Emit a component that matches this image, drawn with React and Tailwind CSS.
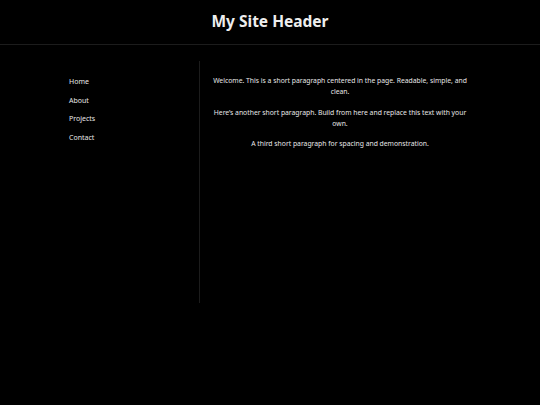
export default function App() {
  return (
    <div className="min-h-[405px] bg-black text-[#e8e8e8]" style={{ fontFamily: '"Noto Sans", sans-serif' }}>
      <header className="h-[45px] border-b border-[#1c1c1c] flex items-center justify-center">
        <h1 className="text-[15.5px] font-bold leading-none text-[#eeeeee]">My Site Header</h1>
      </header>
      <div className="mx-auto w-[420px] mt-[16px] flex">
        <nav className="w-[140px] border-r border-[#1c1c1c] min-h-[242px] pl-[9px] pt-[15px]">
          <ul className="flex flex-col gap-[7.5px] text-[7px] leading-[11px]">
            <li>Home</li>
            <li>About</li>
            <li>Projects</li>
            <li>Contact</li>
          </ul>
        </nav>
        <main className="flex-1 px-[10px] pt-[14px] text-center text-[6.8px] leading-[11px] flex flex-col gap-[9.5px]">
          <p>Welcome. This is a short paragraph centered in the page. Readable, simple, and clean.</p>
          <p>Here’s another short paragraph. Build from here and replace this text with your own.</p>
          <p>A third short paragraph for spacing and demonstration.</p>
        </main>
      </div>
    </div>
  );
}
